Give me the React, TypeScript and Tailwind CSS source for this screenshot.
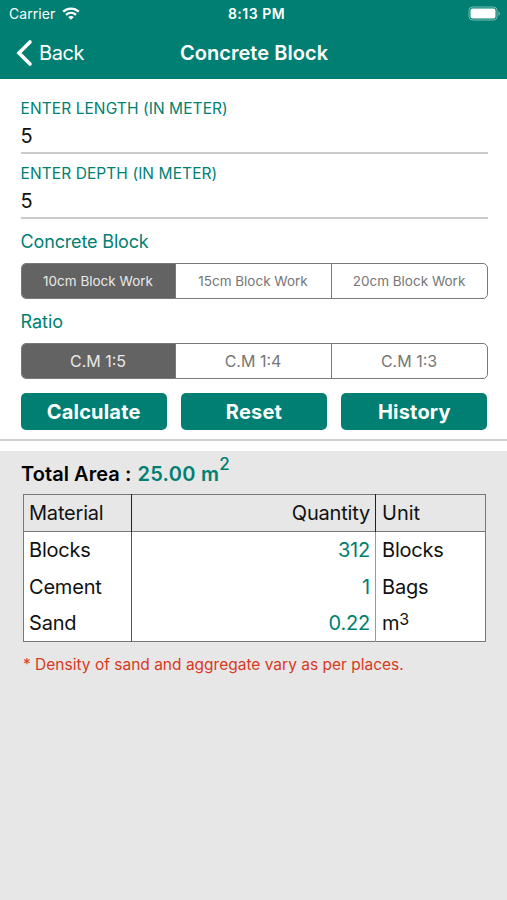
import { useState } from "react";
import clsx from "clsx";

const BLOCK_SIZES = ["10cm Block Work", "15cm Block Work", "20cm Block Work"];
const RATIOS = ["C.M 1:5", "C.M 1:4", "C.M 1:3"];

const MATERIALS = [
  { name: "Blocks", quantity: "312", unit: "Blocks", power: "" },
  { name: "Cement", quantity: "1", unit: "Bags", power: "" },
  { name: "Sand", quantity: "0.22", unit: "m", power: "3" },
];

function StatusBar() {
  return (
    <div className="grid h-[27px] grid-cols-3 items-center pl-[9px] pr-[6px]">
      <div className="flex items-center gap-[7px]">
        <span className="text-[14px] leading-none tracking-[0.05px]">
          Carrier
        </span>
        <svg width="18" height="14" viewBox="0 0 18 14" fill="none">
          <path
            d="M1.2 4.7C5.6 .5 12.4 .5 16.8 4.7"
            stroke="white"
            strokeWidth="2.3"
          />
          <path
            d="M4 7.9C6.9 5.2 11.1 5.2 14 7.9"
            stroke="white"
            strokeWidth="2.3"
          />
          <path d="M9 12.8L6.1 10C7.7 8.6 10.3 8.6 11.9 10Z" fill="white" />
        </svg>
      </div>
      <span className="whitespace-nowrap pl-[3px] text-center text-[14px] font-semibold leading-none tracking-[0.5px]">
        8:13 PM
      </span>
      <svg
        className="justify-self-end"
        width="33"
        height="15"
        viewBox="0 0 33 15"
      >
        <rect
          x="1"
          y="1"
          width="28"
          height="13"
          rx="3.5"
          fill="none"
          stroke="#7dbdb4"
        />
        <rect x="2.5" y="2.5" width="25" height="10" rx="2" fill="white" />
        <path d="M30.5 5.2C32.3 6 32.3 9 30.5 9.8Z" fill="#7dbdb4" />
      </svg>
    </div>
  );
}

function NavBar() {
  return (
    <div className="grid h-[52px] grid-cols-[1fr_auto_1fr] items-center pl-4 pr-[15px]">
      <button type="button" className="flex items-center gap-[6px]">
        <svg width="17" height="28" viewBox="0 0 17 28" fill="none">
          <path
            d="M14 3L3 14L14 25"
            stroke="white"
            strokeWidth="3.6"
            strokeLinecap="round"
          />
        </svg>
        <span className="text-[20px] leading-none tracking-[-0.4px]">Back</span>
      </button>
      <h1 className="text-[20px] font-semibold leading-none tracking-[0.05px]">
        Concrete Block
      </h1>
    </div>
  );
}

function Field({
  label,
  value,
  onChange,
}: {
  label: string;
  value: string;
  onChange: (value: string) => void;
}) {
  return (
    <label className="flex h-[65px] flex-col border-b-2 border-[#cbcbcb]">
      <span className="mt-[11px] text-[15.5px] leading-[18px] tracking-[0.08px] text-[#007f72]">
        {label}
      </span>
      <input
        value={value}
        onChange={(e) => onChange(e.target.value)}
        className="mt-[5px] h-[26px] w-full text-[20px] leading-none text-[#111] outline-none"
      />
    </label>
  );
}

function Segmented({
  options,
  selected,
  onSelect,
  textClass,
}: {
  options: string[];
  selected: number;
  onSelect: (index: number) => void;
  textClass: string;
}) {
  return (
    <div className="grid h-9 grid-cols-[153px_156px_1fr] overflow-hidden rounded-[5px] border border-[#7a7a7a]">
      {options.map((option, i) => (
        <button
          key={option}
          type="button"
          onClick={() => onSelect(i)}
          className={clsx(
            "leading-none",
            textClass,
            i > 0 && "border-l border-[#7a7a7a]",
            i === selected ? "bg-[#636363] text-[#e9e9e9]" : "text-[#767676]",
          )}
        >
          {option}
        </button>
      ))}
    </div>
  );
}

function ActionButton({ children }: { children: string }) {
  return (
    <button
      type="button"
      className="h-[37px] rounded-[5px] bg-[#007f72] text-[20px] font-bold leading-none tracking-[0.2px] text-white"
    >
      {children}
    </button>
  );
}

export default function App() {
  const [length, setLength] = useState("5");
  const [depth, setDepth] = useState("5");
  const [size, setSize] = useState(0);
  const [ratio, setRatio] = useState(0);

  return (
    <div className="flex h-[900px] w-[507px] flex-col overflow-hidden bg-white font-['Inter',sans-serif]">
      <header className="h-[79px] bg-[#007f72] text-white">
        <StatusBar />
        <NavBar />
      </header>

      <main className="h-[362px] border-b-2 border-[#cfcfcf] pl-[20.5px] pr-[19.5px] pt-[10px]">
        <Field
          label="ENTER LENGTH (IN METER)"
          value={length}
          onChange={setLength}
        />
        <Field
          label="ENTER DEPTH (IN METER)"
          value={depth}
          onChange={setDepth}
        />

        <h2 className="mt-3 h-8 pt-[1px] text-[18px] leading-[20px] tracking-[-0.15px] text-[#007f72]">
          Concrete Block
        </h2>
        <Segmented
          options={BLOCK_SIZES}
          selected={size}
          onSelect={setSize}
          textClass="pt-[2px] text-[13.5px]"
        />

        <h2 className="mt-3 h-8 pt-[1px] text-[18px] leading-[20px] text-[#007f72]">
          Ratio
        </h2>
        <Segmented
          options={RATIOS}
          selected={ratio}
          onSelect={setRatio}
          textClass="text-[16px]"
        />

        <div className="mt-[14px] grid grid-cols-3 gap-[14px]">
          <ActionButton>Calculate</ActionButton>
          <ActionButton>Reset</ActionButton>
          <ActionButton>History</ActionButton>
        </div>
      </main>

      <section className="mt-[10px] flex-1 bg-[#e7e7e7] pl-[23px] pr-[21px]">
        <p className="-ml-[2px] h-[43px] pt-[11px] text-[20px] font-semibold leading-[24px] tracking-[0.05px] text-black">
          Total Area :{" "}
          <span className="ml-px tracking-[0.3px] text-[#007f72]">
            25.00 m
            <sup className="-top-[11px] align-baseline text-[17px] font-medium leading-none">
              2
            </sup>
          </span>
        </p>

        <table className="w-full table-fixed border-collapse border border-[#777] text-[20px] leading-none tracking-[-0.2px] text-[#111]">
          <colgroup>
            <col className="w-[108px]" />
            <col />
            <col className="w-[110px]" />
          </colgroup>
          <thead>
            <tr className="h-[37px] border-b border-[#777]">
              <th className="py-0 pl-[5px] text-left font-normal">Material</th>
              <th className="border-x border-[#222] py-0 pr-[5px] text-right font-normal">
                Quantity
              </th>
              <th className="py-0 pl-[6px] text-left font-normal tracking-normal">
                Unit
              </th>
            </tr>
          </thead>
          <tbody className="bg-white">
            {MATERIALS.map((row) => (
              <tr key={row.name} className="h-[37px] last:h-[36px]">
                <td className="py-0 pl-[5px]">{row.name}</td>
                <td className="border-l border-r border-l-[#555] border-r-[#999] py-0 pr-[5px] text-right text-[#007f72]">
                  {row.quantity}
                </td>
                <td className="py-0 pl-[6px]">
                  {row.unit}
                  {row.power && (
                    <sup className="-top-[5px] align-baseline text-[16px] leading-none">
                      {row.power}
                    </sup>
                  )}
                </td>
              </tr>
            ))}
          </tbody>
        </table>

        <p className="mt-[13px] text-[15.5px] leading-[20px] text-[#d63a22]">
          * Density of sand and aggregate vary as per places.
        </p>
      </section>
    </div>
  );
}
